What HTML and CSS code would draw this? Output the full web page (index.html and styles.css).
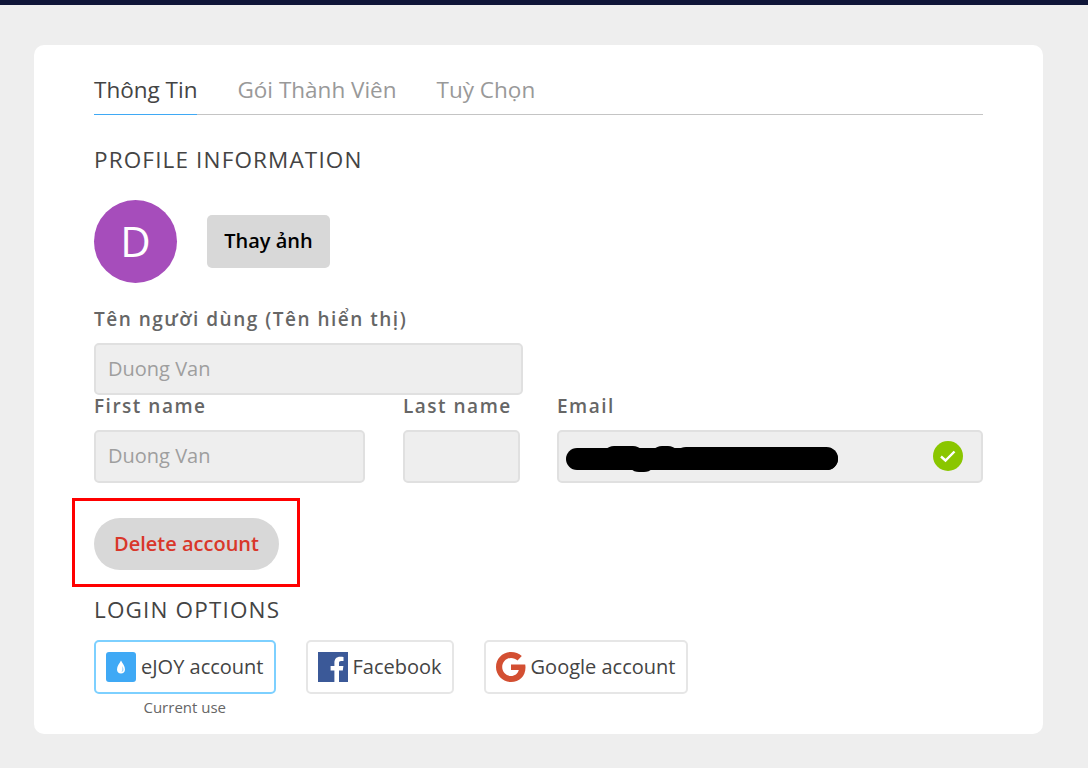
FILE: index.html
```html
<!DOCTYPE html>
<html lang="vi">
<head>
    <meta charset="UTF-8">
    <meta name="viewport" content="width=device-width, initial-scale=1.0">
    <title>Profile</title>
    <link rel="stylesheet" href="styles.css">
</head>
<body>
    <div class="top-bar"></div>
    <div class="card">
        <div class="tabs">
            <a class="tab tab-active">Thông Tin</a>
            <a class="tab">Gói Thành Viên</a>
            <a class="tab">Tuỳ Chọn</a>
        </div>

        <h3 class="section-title profile-title">PROFILE INFORMATION</h3>
        <div class="avatar-row">
            <div class="avatar">D</div>
            <button class="btn-photo">Thay ảnh</button>
        </div>

        <label class="field-label display-label">Tên người dùng (Tên hiển thị)</label>
        <input class="text-input display-input" type="text" value="Duong Van" disabled>

        <div class="name-row">
            <div class="field field-first">
                <label class="field-label">First name</label>
                <input class="text-input" type="text" value="Duong Van" disabled>
            </div>
            <div class="field field-last">
                <label class="field-label">Last name</label>
                <input class="text-input" type="text" disabled>
            </div>
            <div class="field field-email">
                <label class="field-label">Email</label>
                <div class="email-box">
                    <input class="text-input" type="text" disabled>
                    <!-- email bi boi den -->
                    <svg class="scribble" width="272" height="26" viewBox="0 0 272 26">
                        <g fill="none" stroke="#000" stroke-linecap="round">
                            <path d="M11 13H261" stroke-width="22"/>
                            <path d="M120 12.500H260.500" stroke-width="23"/>
                            <path d="M48 12H67M96 12H102" stroke-width="24"/>
                            <path d="M73 14H78" stroke-width="24"/>
                        </g>
                    </svg>
                    <svg class="check" width="30" height="30" viewBox="0 0 30 30">
                        <circle cx="15" cy="15" r="15" fill="#8ac600"/>
                        <path d="M8 15.500L12.500 19.500L21.500 10.500" fill="none" stroke="#fff" stroke-width="2.400"/>
                    </svg>
                </div>
            </div>
        </div>

        <div class="delete-row">
            <button class="btn-delete">Delete account</button>
            <div class="highlight-box"></div>
        </div>

        <h3 class="section-title login-title">LOGIN OPTIONS</h3>
        <div class="login-row">
            <div class="login-item">
                <a class="login-btn login-btn-active">
                    <svg width="30" height="30" viewBox="0 0 30 30">
                        <rect width="30" height="30" rx="3" fill="#3fa9f5"/>
                        <path d="M15 8.500C16.500 11.500 19 14 19 17.500C19 20 17.200 21.500 15 21.500C12.800 21.500 11 20 11 17.500C11 14 13.500 11.500 15 8.500Z" fill="#fff"/>
                        <path d="M16 14C17 15.500 17.500 16.500 17.500 17.800C17.500 19 16.700 20 15.500 20C16.200 18.500 16.500 16.500 16 14Z" fill="#3fa9f5" opacity="0.500"/>
                    </svg>
                    eJOY account
                </a>
                <span class="current-use">Current use</span>
            </div>
            <a class="login-btn">
                <svg width="30" height="30" viewBox="0 0 30 30">
                    <rect width="30" height="30" fill="#3b5998"/>
                    <path d="M21 30V18.500H24.800L25.400 14H21V11.200C21 9.900 21.400 9 23.200 9H25.500V5C25.100 5 23.700 4.800 22.100 4.800C18.700 4.800 16.400 6.900 16.400 10.700V14H12.600V18.500H16.400V30Z" fill="#fff"/>
                </svg>
                Facebook
            </a>
            <a class="login-btn login-btn-google">
                <svg width="30" height="30" viewBox="0 0 30 30">
                    <path d="M15 6C17.600 6 19.800 6.900 21.500 8.500L25.800 4C22.900 1.400 19.200 0 15 0C6.700 0 0 6.700 0 15C0 23.300 6.700 30 15 30C23.300 30 29.500 24.200 29.500 15.500C29.500 14.400 29.400 13.400 29.200 12.500H15V18H22.800C21.800 21.700 18.800 24 15 24C10.200 24 6.200 20 6.200 15C6.200 10 10.200 6 15 6Z" fill="#d34f32"/>
                </svg>
                Google account
            </a>
        </div>
    </div>
</body>
</html>
```

FILE: styles.css
```css
* {
    box-sizing: border-box;
}
body {
    font-family: 'Open Sans', sans-serif;
    margin: 0;
    padding: 0;
    background: #eeeeee;
    color: #444;
    height: 768px;
    overflow: hidden;
}
.top-bar {
    height: 5px;
    background: #0f1538;
}
.card {
    width: 1009px;
    height: 689px;
    margin: 40px 0 0 34px;
    padding: 24px 60px 0;
    background: #fff;
    border-radius: 10px;
}
.tabs {
    display: flex;
    gap: 40px;
    height: 46px;
    border-bottom: 1px solid #c4c4c4;
}
.tab {
    height: 46px;
    font-size: 22.500px;
    line-height: 42px;
    color: #999;
}
.tab-active {
    color: #444;
    border-bottom: 1px solid #3fa9f5;
}
.section-title {
    margin: 0;
    font-size: 22.500px;
    font-weight: 400;
    line-height: 30px;
    letter-spacing: 1.150px;
    color: #444;
}
.profile-title {
    margin-top: 30px;
}
.avatar-row {
    display: flex;
    align-items: center;
    gap: 30px;
    margin-top: 25px;
}
.avatar {
    width: 83px;
    height: 83px;
    border-radius: 50%;
    background: #a64dbb;
    color: #fff;
    font-size: 42px;
    line-height: 81px;
    text-align: center;
}
.btn-photo {
    width: 123px;
    height: 53px;
    padding: 0 0 2px;
    border: none;
    border-radius: 5px;
    background: #d8d8d8;
    color: #000;
    font-family: inherit;
    font-size: 20px;
    font-weight: 600;
}
.field-label {
    display: block;
    height: 24px;
    font-size: 19px;
    font-weight: 600;
    line-height: 24px;
    letter-spacing: 1.500px;
    color: #666;
}
.display-label {
    margin-top: 24px;
}
.text-input {
    display: block;
    width: 100%;
    height: 53px;
    padding: 0 12px 2px;
    border: 2px solid #e0e0e0;
    border-radius: 5px;
    background: #eeeeee;
    font-family: inherit;
    font-size: 20px;
    color: #9e9e9e;
}
.display-input {
    width: 429px;
    height: 52px;
    margin-top: 12px;
}
.name-row {
    display: flex;
    margin-top: -1px;
}
.name-row .field-label {
    height: 36px;
    line-height: 24px;
}
.field-first {
    width: 271px;
    margin-right: 38px;
}
.field-last {
    width: 117px;
    margin-right: 37px;
}
.field-email {
    width: 426px;
}
.email-box {
    position: relative;
}
.scribble {
    position: absolute;
    left: 9px;
    top: 16px;
}
.check {
    position: absolute;
    right: 20px;
    top: 11px;
}
.delete-row {
    position: relative;
    margin-top: 35px;
}
.btn-delete {
    display: block;
    width: 185px;
    height: 52px;
    padding: 0 0 1px;
    border: none;
    border-radius: 26px;
    background: #d8d8d8;
    color: #d9372a;
    font-family: inherit;
    font-size: 20px;
    font-weight: 600;
}
.highlight-box {
    position: absolute;
    left: -22px;
    top: -20px;
    width: 228px;
    height: 89px;
    border: 3px solid #ff0000;
}
.login-title {
    margin-top: 25px;
}
.login-row {
    display: flex;
    gap: 30px;
    margin-top: 15px;
}
.login-item {
    display: flex;
    flex-direction: column;
    align-items: center;
}
.login-btn {
    display: flex;
    align-items: center;
    gap: 5px;
    height: 54px;
    padding: 0 10px 2px;
    border: 2px solid #e6e6e6;
    border-radius: 5px;
    font-size: 20px;
    color: #444;
    white-space: nowrap;
}
.login-btn svg {
    margin-top: 2px;
}
.login-btn-active {
    border-color: #7dd0ff;
}
.login-btn-google {
    padding-right: 11px;
}
.current-use {
    margin-top: 3px;
    font-size: 15px;
    line-height: 20px;
    color: #666;
}
```
